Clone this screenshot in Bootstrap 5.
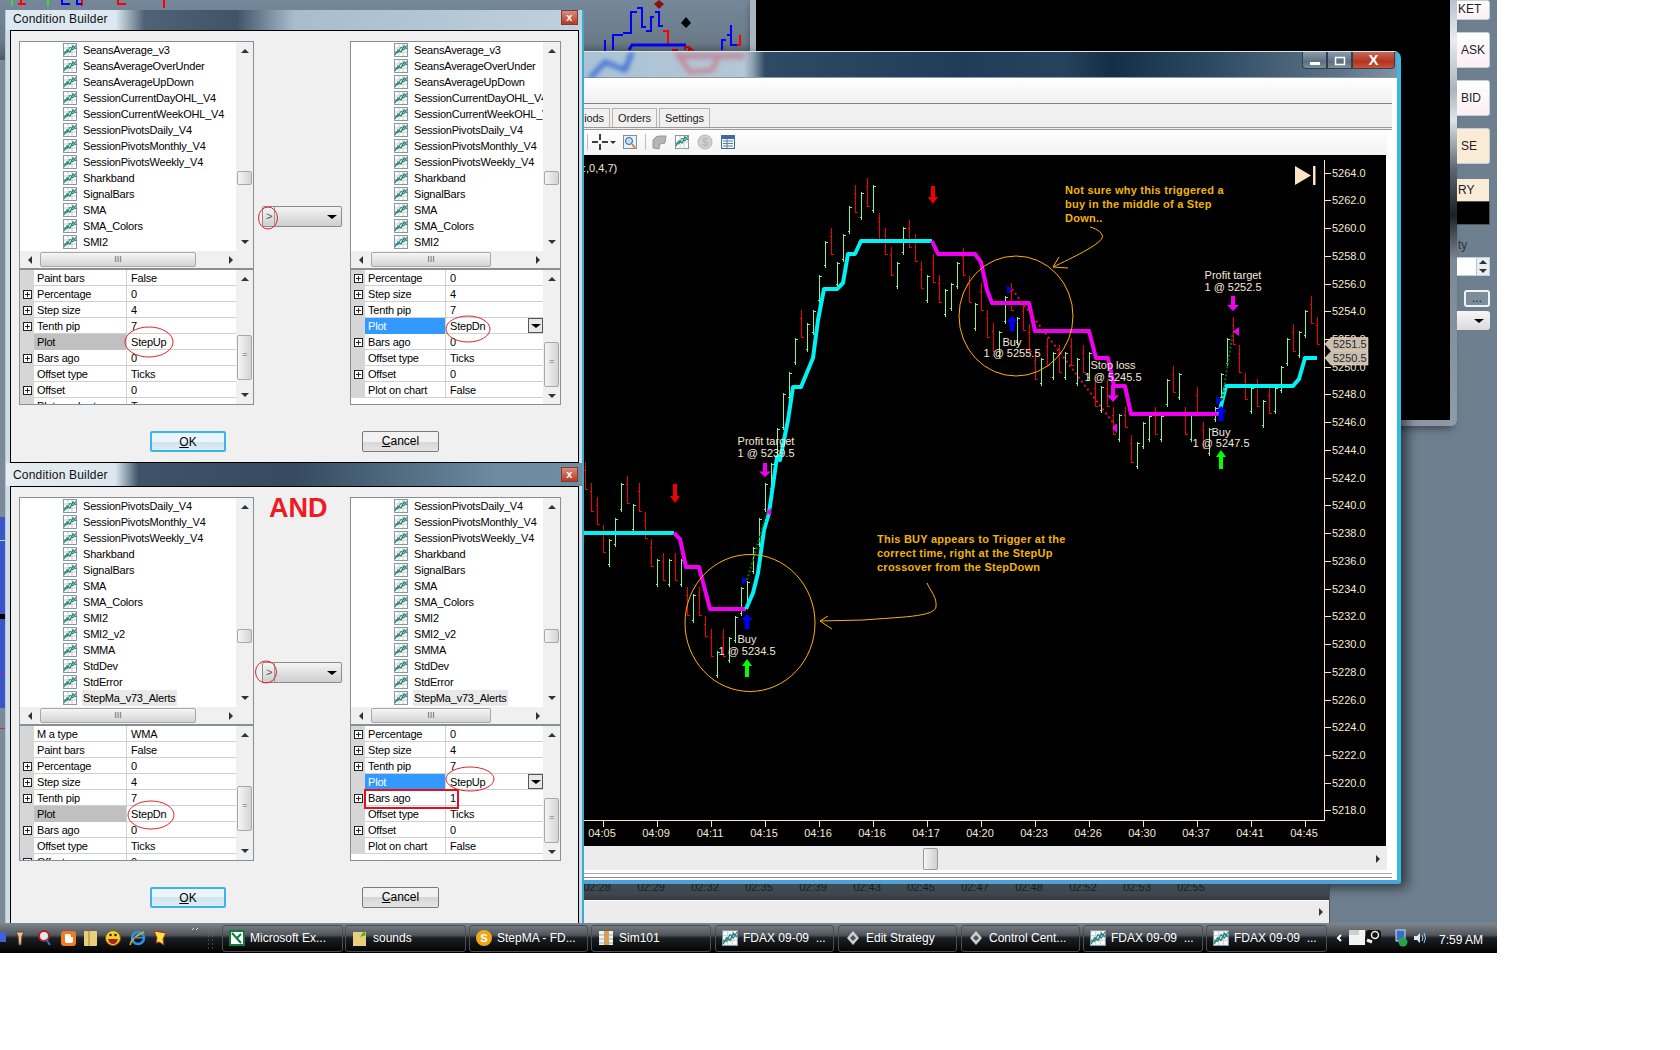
<!DOCTYPE html>
<html lang="en">
<head>
<meta charset="utf-8">
<title>Condition Builder</title>
<link href="https://cdn.jsdelivr.net/npm/bootstrap@5.3.0/dist/css/bootstrap.min.css" rel="stylesheet">
<style>
html,body{background:#fff;margin:0;height:1050px;overflow:hidden}
body{font-family:"Liberation Sans",Arial,sans-serif;font-size:11px;color:#000}
.desk{position:relative;width:1497px;height:953px;background:#6e7f90;overflow:hidden}
.layer{position:absolute;display:block}
/* back windows */
.backtop{left:0;top:0}
.backstrip{left:0;top:0}
.blackwin{left:750px;top:0;width:700px;height:426px;background:#000;border-left:6px solid #a9b4bf;border-bottom:6px solid #8c98a4;box-shadow:2px 2px 8px rgba(0,0,0,.5)}
.blackframe{left:1450px;top:0;width:7px;height:426px;border-bottom-right-radius:6px;background:linear-gradient(#b8c2cc 0,#e8ecef 40px,#aab4be 90px,#dfe4e8 120px,#5b6570 170px,#1c2127 215px,#7c8894 260px,#8f9ba6 100%)}
.sidepanel{left:1457px;top:0;width:33px;height:330px;color:#222;font-size:12px}
.sb{height:36px;margin-top:12px;background:linear-gradient(#fff,#fdeef4);border:1px solid #c3cdd6;border-left:0;border-radius:0 3px 3px 0;line-height:34px;padding-left:4px}
.sb-first{height:20px;margin-top:0;line-height:16px;padding-left:1px}
.sb-peach{background:#faebd7}
.sb-ry{height:22px;margin-top:15px;background:#faebd7;line-height:22px;padding-left:1px;border:0;border-radius:0;width:32px}
.sb-black{height:24px;background:#000;border:1px solid #555;border-left:0;width:33px}
.sb-ty{margin-top:11px;height:16px;color:#333;padding-left:1px}
.sb-spin{height:19px;margin-top:5px;background:#fff;border:1px solid #c3cdd6;border-left:0;display:flex;justify-content:flex-end}
.spincell{width:13px;background:#e8eef4;border-left:1px solid #b9c4cf;display:flex;flex-direction:column;align-items:center;justify-content:space-around}
.tu-b{border-color:transparent transparent #5a78b0}
.td-l{border-color:#5a78b0 transparent transparent}
.sb-dots{width:26px;height:17px;margin:14px 0 0 7px;background:#7d8c9b;border:2px solid #f2f2f2;border-radius:3px;text-align:center;line-height:12px;color:#222}
.sb-drop{height:19px;margin-top:4px;background:linear-gradient(#f7f7f7,#dadada);border-radius:0 3px 3px 0;display:flex;justify-content:flex-end;align-items:center;padding-right:6px}
.backbot{left:570px;top:878px;width:760px;height:45px;border-right:1px solid #555;background:linear-gradient(#7e92a5 0,#6d7f8f 6px,#4f5a64 12px,#33383d 22px)}
.backlabels{height:22px;line-height:18px;color:#22282e;font-size:11px}
.backlabels span{width:54px;text-align:center;flex:none}
.backscroll{height:23px;background:#ececec;border-left:1px solid #fff;border-top:1px solid #fff;padding-right:6px}
/* main chart window */
.mainwin{left:560px;top:51px;width:841px;height:833px;border-right:4px solid #39b9e6;border-bottom:4px solid #4aa3d4;border-top:1px solid #dfe7ee;border-radius:0 7px 3px 0;box-shadow:6px 4px 12px rgba(0,0,0,.55);background:#fff}
.mw-title{height:26px;flex:none;position:relative;padding-right:2px;background:linear-gradient(90deg,#a9c2d6 0,#b3c7d6 22%,#8ea2b2 23%,#2f4a64 24.500%,#203c59 48%,#27425c 60%,#142e47 66%,#2e4a63 78%,#5c7488 93%,#7f93a3 100%);border-bottom:1px solid #8a9aa8}
.glass{left:0;top:0}
.wbtn{height:17px;width:25px;position:relative;background:linear-gradient(#8a9cab,#5d7183 60%,#7c8e9c);border:1px solid #2f3f4e;border-top:0;color:#fff;text-align:center}
.wbtn-first{border-bottom-left-radius:4px}
.wbtn-x{width:43px;background:linear-gradient(#c46a5a,#b5321e 60%,#c9553c);border-bottom-right-radius:4px;font-weight:bold;font-size:15px;line-height:15px}
.mw-tb1{height:26px;flex:none;margin-right:5px;background:linear-gradient(#fff,#f0f0f0);border-bottom:1px solid #808080}
.mw-tabs{height:26px;flex:none;margin-right:5px;background:#f0f0f0;padding-top:4px;border-bottom:3px double #9a9a9a;font-size:11px;letter-spacing:-.1px}
.mwtab{height:19px;border:1px solid #b5b5b5;border-bottom:0;background:#f0f0f0;line-height:18px;margin-right:2px;padding:0 5px;color:#222}
.mwtab-cut{width:50px;text-align:right;padding:0 5px;border-left:0}
.mw-tb2{height:25px;flex:none;margin-right:10px;background:linear-gradient(#fff,#f2f2f2)}
.mw-chart{display:block;flex:none;background:#000}
.mw-scroll{height:24px;flex:none;margin-right:10px;background:#ececec;padding:1px 7px 0 363px}
.hthumb{width:15px;height:22px;border:1px solid #999;border-radius:2px;background:linear-gradient(90deg,#f4f4f4,#d0d0d0)}
.mw-foot{flex-grow:1;border-top:1px solid #aaa;border-bottom:1px solid #888;margin:3px 5px 2px 0}
/* dialogs */
.dlg{width:579px;background:#cfdde8;border-right:2px solid #3ba9cc;border-left:1px solid #b9c6d1}
.dlg-a{left:5px;top:10px;height:453px}
.dlg-b{left:5px;top:463px;height:468px;border-bottom:2px solid #3ba9cc}
.dt{flex:none;padding-left:7px;font-size:12px;letter-spacing:.2px;color:#111}
.dt-a{height:20px;line-height:18px;background:linear-gradient(90deg,#dce8f1 0,#dde8f0 19%,#4f6376 24%,#3f5468 40%,#a9bccc 50%,#bfd1de 100%)}
.dt-b{height:23px;line-height:24px;background:linear-gradient(90deg,#e6edf3 0,#dbe6ee 19%,#3e5367 23%,#354a5e 50%,#6c8aa1 85%,#6f8ca3 100%)}
.dx{width:17px;height:15px;margin:0 4px 0 0;background:linear-gradient(#dd8b7c,#b73a24);border:1px solid #7e3b30;color:#fff;font-weight:bold;font-size:11px;line-height:13px;text-align:center}
.dbody{margin:0 3px 0 4px;border:1px solid #000;background:#f0f0f0;padding:10px 0 0 8px;font-size:11px;letter-spacing:-.2px}
.colleft{width:235px;flex:none}
.colmid{width:96px;flex:none}
.colright{width:211px;flex:none}
.combo{width:80px;height:21px;margin:165px 0 0 8px;border:1px solid #8b8b8b;border-radius:2px;background:linear-gradient(#f4f4f4,#cfcfcf);padding:0 4px;font-size:11px}
.combo-gt{color:#555;border-right:1px solid #999;width:12px;height:19px;line-height:19px;margin-left:-4px;padding-left:3px}
.lbox{height:228px;border:1px solid #8a8f96;background:#fff}
.litems{height:209px;overflow:hidden;list-style:none;margin:0;padding:0}
.litems li{height:16px;line-height:16px;padding-left:43px;white-space:nowrap;display:flex;align-items:center}
.litems svg{width:14px;height:14px;flex:none;margin-right:6px}
.sel-item{background:#e9e9e9;padding:0 1px;margin-left:-1px}
.vbar{width:17px;flex:none;background:#f0f0f0}
.arrowcell{height:18px;flex:none}
.vthumb{width:15px;margin-left:1px;flex:none;border:1px solid #a8a8a8;border-radius:2px;background:linear-gradient(90deg,#f5f5f5,#d4d4d4);color:#666;font-size:9px;line-height:3px;text-align:center}
.t-s{height:14px}
.t111{margin-top:111px}.t113{margin-top:113px}
.t47{margin-top:47px}.t54{margin-top:54px}.t42{margin-top:42px}
.t-g{height:45px;padding-top:17px}
.hbar{height:17px;flex:none;background:#f0f0f0}
.harrow{width:20px;flex:none}
.hgrip{height:15px;border:1px solid #a8a8a8;border-radius:2px;background:linear-gradient(#f5f5f5,#d4d4d4);color:#666;font-size:9px;line-height:12px;text-align:center;letter-spacing:0}
.w156{width:156px}.w120{width:120px}
.tu,.td,.tl,.tr2{width:0;height:0;border-style:solid;display:block}
.tu{border-width:0 4px 4px;border-color:transparent transparent #333}
.td{border-width:4px 4px 0;border-color:#333 transparent transparent}
.tl{border-width:4px 4px 4px 0;border-color:transparent #333 transparent transparent}
.tr2{border-width:4px 0 4px 4px;border-color:transparent transparent transparent #333}
.td-b{border-width:4px 5px 0;border-color:#000 transparent transparent}
.gridbox{height:136px;border:1px solid #8a8f96;background:#fff}
.grows{overflow:hidden}
.gr{height:16px;line-height:17px;border-bottom:1px solid #d0d0d0;flex:none}
.gg{flex:none;width:14px;background:#d6d6d6;display:flex;align-items:center;justify-content:center;height:16px}
.gn{flex:none;padding-left:3px;height:16px;border-right:1px solid #d0d0d0}
.gv{flex-grow:1;padding-left:4px;height:15px;display:flex;justify-content:space-between}
.nw-l .gn{width:93px}.nw-r .gn{width:81px}
.gn-gray{background:#c0c0c0}
.gn-blue{background:#3399ff;color:#fff}
.plus{width:9px;height:9px;border:1px solid #222;background:linear-gradient(#222,#222) center/5px 1px no-repeat,linear-gradient(#222,#222) center/1px 5px no-repeat,#fff}
.dropb{width:15px;height:15px;border:1px solid #555;background:#e8e8e8;display:flex;align-items:center;justify-content:center}
.btnrow{margin-top:26px;padding-left:131px}
.wbt{width:76px;height:21px;padding:0;font-size:12px;line-height:19px;color:#000;letter-spacing:0;border:1px solid #7a7a7a;border-radius:2px;background:linear-gradient(#f2f2f2 50%,#d6d6d6 50%,#e4e4e4)}
.wbt:hover{color:#000}
.wbt-ok{border:2px solid #3db4e8;background:linear-gradient(#eaf6fc 50%,#d0e4ee 50%,#dbecf5)}
.wbt-c{margin-left:136px;width:77px}
.ul{text-decoration:underline}
.overlay{left:0;top:0;pointer-events:none}
.andword{left:263px;top:27px;font-size:27px;line-height:36px;font-weight:bold;color:#ed1c24;font-family:"Liberation Sans",Arial,sans-serif}
.redrect{left:358px;top:326px;width:95px;height:20px;border:2px solid #e3101c}
/* taskbar */
.taskbar{left:0;top:923px;width:1497px;height:30px;background:linear-gradient(#80868c 0,#50565c 12px,#1c2024 15px,#000 100%);color:#fff;font-size:12px}
.tbtn{position:absolute;top:2px;height:27px;border:1px solid #4a4f55;border-radius:3px;display:flex;align-items:center;padding:0 0 1px 6px;white-space:nowrap;gap:5px}
.tbtn svg{flex:none}
.tb-a{left:222px;width:121px}.tb-b{left:345px;width:121px}.tb-c{left:469px;width:119px}.tb-d{left:591px;width:120px}.tb-e{left:715px;width:119px}.tb-f{left:838px;width:119px}.tb-g{left:961px;width:119px}.tb-h{left:1083px;width:120px}.tb-i{left:1206px;width:121px}
.tray{left:1330px;top:0}
.clock{position:absolute;left:1439px;top:8px}
</style>
</head>
<body>
<svg width="0" height="0" class="position-absolute">
<defs>
<symbol id="ci" viewBox="0 0 14 14"><rect x=".5" y=".5" width="13" height="13" fill="#fff" stroke="#8a97a3"/><path d="M1 5h12M1 9h12M5 1v12M9 1v12" stroke="#c4ccd4" stroke-width="1" fill="none"/><path d="M1 12l3-5 3 2 3-6 3 3" stroke="#1f9a3a" stroke-width="1.4" fill="none"/><path d="M1 9l3 1 3-6 3 3 3-5" stroke="#2f6fc8" stroke-width="1" fill="none"/></symbol>
<filter id="blur3"><feGaussianBlur stdDeviation="2.500"/></filter>
</defs>
</svg>
<div class="desk">

<svg class="layer backtop" width="756" height="60" viewBox="0 0 756 60">
<defs><linearGradient id="bg1" x1="0" y1="0" x2="0" y2="1"><stop offset="0" stop-color="#75889a"/><stop offset=".7" stop-color="#6a7a88"/><stop offset="1" stop-color="#4d5a64"/></linearGradient></defs>
<rect width="756" height="60" fill="url(#bg1)"/>
<g fill="none" stroke-width="2" shape-rendering="crispEdges">
<path d="M12 0V6M48 0V6" stroke="#43d543"/>
<path d="M21 0V4M18 4H26M82 0V6M118 0V4H126" stroke="#ff0000"/>
<path d="M62 0V4H70M77 0V4H82" stroke="#0000ff"/>
<path d="M164 0V8" stroke="#ff0000"/>
<path d="M605 52V40M613 50V35H623M623 33H631V12H637M637 8H642V27H646M646 31H651V17H654M655 12H659V26H663M722 50V40H726M727 35H731V25M731 35V45H737" stroke="#0000ff"/>
<path d="M663 31H668V44M737 45H740V35" stroke="#ff0000"/>
</g>
<path d="M629 50L632 45H686" stroke="#0000ff" stroke-width="3" fill="none"/>
<path d="M659 0L664 4L659 9L654 4Z" fill="#8a1010"/>
<path d="M686 17L691 23L686 28L681 23Z" fill="#000"/>
<path d="M672 50h6M685 50v-3h4v4M690 48l3 3" stroke="#c00" stroke-width="2" fill="none"/>
</svg>
<svg class="layer backstrip" width="6" height="925" viewBox="0 0 6 925">
<rect x="0" y="60" width="6" height="865" fill="#7c8a97"/>
<rect x="0" y="517" width="5" height="191" fill="#3a55c8"/>
<rect x="0" y="614" width="5" height="5" fill="#000"/>
<rect x="0" y="540" width="5" height="1" fill="#7fa"/>
<rect x="0" y="672" width="5" height="1" fill="#a2a"/>
<rect x="0" y="728" width="5" height="1" fill="#c33"/>
</svg>

<div class="layer blackwin"></div>
<div class="layer blackframe"></div>

<div class="layer sidepanel">
<div class="sb sb-first">KET</div>
<div class="sb">ASK</div>
<div class="sb">BID</div>
<div class="sb sb-peach">SE</div>
<div class="sb sb-ry">RY</div>
<div class="sb-black"></div>
<div class="sb-ty">ty</div>
<div class="sb-spin"><div class="spincell"><span class="tu tu-b"></span><span class="td td-l"></span></div></div>
<div class="sb-dots">...</div>
<div class="sb-drop"><span class="td td-b"></span></div>
</div>

<div class="layer backbot d-flex flex-column">
<div class="backlabels d-flex"><span>02:28</span><span>02:29</span><span>02:32</span><span>02:35</span><span>02:39</span><span>02:43</span><span>02:45</span><span>02:47</span><span>02:48</span><span>02:52</span><span>02:53</span><span>02:55</span></div>
<div class="backscroll d-flex justify-content-end align-items-center"><span class="tr2"></span></div>
</div>

<!-- main chart window -->
<div class="layer mainwin d-flex flex-column">
<div class="mw-title d-flex justify-content-end align-items-start">
<svg class="layer glass" width="200" height="26" viewBox="560 52 200 26">
<g filter="url(#blur3)" fill="none" stroke-width="4">
<path d="M590 78L605 62L625 70L632 52" stroke="#2a5fd8"/>
<path d="M676 52L690 72L712 70L720 54" stroke="#c7808c"/>
<path d="M680 56H745" stroke="#bc8ea0" stroke-width="6"/>
</g>
</svg>
<div class="wbtn wbtn-first"><svg width="12" height="12" viewBox="0 0 12 12"><rect x="1" y="7" width="10" height="3" fill="#fff"/></svg></div>
<div class="wbtn"><svg width="12" height="12" viewBox="0 0 12 12"><rect x="1.5" y="2.5" width="9" height="7" fill="none" stroke="#fff" stroke-width="1.5"/></svg></div>
<div class="wbtn wbtn-x">X</div>
</div>
<div class="mw-tb1"></div>
<div class="mw-tabs d-flex"><div class="mwtab mwtab-cut">iods</div><div class="mwtab">Orders</div><div class="mwtab">Settings</div></div>
<div class="mw-tb2 d-flex align-items-center">
<svg width="180" height="25" viewBox="560 130 180 25">
<path d="M587.5 134v16M645.5 134v16" stroke="#bbb"/>
<path d="M592 142h6M602 142h6M600 134v6M600 144v6" stroke="#000" stroke-width="1.5"/>
<path d="M610 141h6l-3 3z" fill="#333"/>
<rect x="623.5" y="135.5" width="13" height="13" fill="#e8f0f8" stroke="#7a8fa8"/><circle cx="629" cy="141" r="3.5" fill="#bfe0ff" stroke="#33618f"/><path d="M632 144l3 4" stroke="#d88a2a" stroke-width="2"/>
<path d="M653 140q3-5 8-4l5 0-1 7-5 1-1 5-6-1z" fill="#b5b5b5" stroke="#999"/>
<rect x="675.5" y="135.5" width="13" height="13" fill="#fff" stroke="#8a97a3"/><path d="M676 142h13M680 136v13M684 136v13" stroke="#c4ccd4"/><path d="M676 146l3-5 3 2 3-6 3 3" stroke="#1f9a3a" stroke-width="1.4" fill="none"/><path d="M676 143l3 1 3-6 3 3 3-5" stroke="#2f6fc8" fill="none"/>
<circle cx="705" cy="142" r="7" fill="#cfcfcf" stroke="#b5b5b5"/><text x="705" y="146" font-size="10" text-anchor="middle" fill="#b0b0b0" font-family="Liberation Sans">$</text>
<rect x="721.5" y="135.5" width="13" height="13" fill="#f4f8fc" stroke="#3f6a9a"/><rect x="722" y="136" width="12" height="3" fill="#3f6a9a"/><path d="M723 141h10M723 143.500h10M723 146h10M727 139v9" stroke="#5f80a5"/>
</svg>
</div>
<svg class="mw-chart" id="chart" width="826" height="691" viewBox="560 155 826 691" font-family="Liberation Sans, Arial, sans-serif" font-size="11" fill="#f6e8d6">
<g id="bars" shape-rendering="crispEdges"></g>
<g fill="none" stroke-linejoin="round">
<polyline points="560,533 674,533" stroke="#00f2f2" stroke-width="4"/>
<polyline points="674,533 680,539 686,567 699,567 710,609 746,609" stroke="#f000f0" stroke-width="4"/>
<polyline points="746,609 753,593 758,573 764,530 769,513 777,457 780,460 788,420 793,387 801,387 813,358 818,320 824,289 837,289 843,283 848,254 855,254 861,241 932,241" stroke="#00f2f2" stroke-width="4"/>
<polyline points="932,241 938,254 975,254 981,262 987,290 992,303 1029,303 1035,331 1089,331 1096,358 1108,358 1114,386 1125,386 1131,414 1219,414" stroke="#f000f0" stroke-width="4"/>
<polyline points="1219,414 1226,386 1293,386 1299,379 1305,358 1317,358" stroke="#00f2f2" stroke-width="4"/>
<path d="M1012 289L1117 428" stroke="#d8134f" stroke-width="2" stroke-dasharray="2 3"/>
<path d="M747 580L767 512" stroke="#0f6b10" stroke-width="2" stroke-dasharray="2 2"/>
<path d="M1222 400L1233 332" stroke="#0f6b10" stroke-width="2" stroke-dasharray="2 2"/>
<ellipse cx="750" cy="623" rx="65" ry="68.500" stroke="#ffb400"/>
<ellipse cx="1016" cy="316" rx="57" ry="60" stroke="#ffb400"/>
<path d="M927 583C931 592 937 597 936 607C934 617 900 617 863 620L820 621M828 616L820 621L832 629" stroke="#ffb400"/>
<path d="M1090 227C1098 229 1104 234 1102 238C1099 245 1072 258 1053 267M1059 257L1053 267L1068 268" stroke="#ffb400"/>
</g>
<g id="arrows"></g>
<path d="M1007 285L1012 289.500L1007 294ZM1216 396L1222 400.500L1216 405ZM742 576L747 580.500L742 585Z" fill="#0000e6"/>
<path d="M1117 423.500L1112 428L1117 433ZM1239 327L1233 331.500L1239 336ZM771 508L766 512L771 516Z" fill="#f000f0"/>
<g text-anchor="middle">
<text x="1012" y="346">Buy</text><text x="1012" y="357">1 @ 5255.5</text>
<text x="1113" y="369">Stop loss</text><text x="1113" y="381">1 @ 5245.5</text>
<text x="1221" y="436">Buy</text><text x="1221" y="447">1 @ 5247.5</text>
<text x="1233" y="279">Profit target</text><text x="1233" y="291">1 @ 5252.5</text>
<text x="766" y="445">Profit target</text><text x="766" y="457">1 @ 5239.5</text>
<text x="747" y="643">Buy</text><text x="747" y="655">1 @ 5234.5</text>
</g>
<text x="583" y="172">:,0,4,7)</text>
<g font-weight="bold" fill="#f2b400" letter-spacing=".25">
<text x="1065" y="194">Not sure why this triggered a</text>
<text x="1065" y="208">buy in the middle of a Step</text>
<text x="1065" y="222">Down..</text>
<text x="877" y="543">This BUY appears to Trigger at the</text>
<text x="877" y="557">correct time, right at the StepUp</text>
<text x="877" y="571">crossover from the StepDown</text>
</g>
<path d="M1295 166L1311 175.500L1295 185Z" fill="#ffe4c4"/><rect x="1313" y="166" width="2.500" height="19" fill="#ffe4c4"/>
<path id="axis" d="M560 820.500H1324.500V160" fill="none" stroke="#ffe4c4" shape-rendering="crispEdges"/>
<path id="ticks" fill="none" stroke="#ffe4c4" shape-rendering="crispEdges"/>
<g text-anchor="start"><text x="1332" y="177">5264.0</text><text x="1332" y="204">5262.0</text><text x="1332" y="232">5260.0</text><text x="1332" y="260">5258.0</text><text x="1332" y="288">5256.0</text><text x="1332" y="315">5254.0</text><text x="1332" y="343">5252.0</text><text x="1332" y="371">5250.0</text><text x="1332" y="398">5248.0</text><text x="1332" y="426">5246.0</text><text x="1332" y="454">5244.0</text><text x="1332" y="482">5242.0</text><text x="1332" y="509">5240.0</text><text x="1332" y="537">5238.0</text><text x="1332" y="565">5236.0</text><text x="1332" y="593">5234.0</text><text x="1332" y="620">5232.0</text><text x="1332" y="648">5230.0</text><text x="1332" y="676">5228.0</text><text x="1332" y="704">5226.0</text><text x="1332" y="731">5224.0</text><text x="1332" y="759">5222.0</text><text x="1332" y="787">5220.0</text><text x="1332" y="814">5218.0</text></g>
<g text-anchor="middle"><text x="602" y="837">04:05</text><text x="656" y="837">04:09</text><text x="710" y="837">04:11</text><text x="764" y="837">04:15</text><text x="818" y="837">04:16</text><text x="872" y="837">04:16</text><text x="926" y="837">04:17</text><text x="980" y="837">04:20</text><text x="1034" y="837">04:23</text><text x="1088" y="837">04:26</text><text x="1142" y="837">04:30</text><text x="1196" y="837">04:37</text><text x="1250" y="837">04:41</text><text x="1304" y="837">04:45</text></g>
<path d="M1325 344L1331 337.500H1368V351H1331ZM1325 358L1331 351.500H1368V365H1331Z" fill="#c9bfb0" stroke="#ffe4c4" stroke-width=".6"/>
<text x="1333" y="348" fill="#2a2a2a">5251.5</text><text x="1333" y="362" fill="#2a2a2a">5250.5</text>
</svg>
<div class="mw-scroll d-flex justify-content-between align-items-center"><div class="hthumb"></div><span class="tr2"></span></div>
<div class="mw-foot"></div>
</div>

<!-- dialog A -->
<div class="layer dlg dlg-a d-flex flex-column">
<div class="dt dt-a d-flex justify-content-between"><span>Condition Builder</span><span class="dx">x</span></div>
<div class="dbody flex-grow-1">
<div class="d-flex">
<div class="colleft">
<div class="lbox d-flex flex-column">
<div class="d-flex flex-grow-1">
<ul class="litems flex-grow-1">
<li><svg><use href="#ci"/></svg>SeansAverage_v3</li><li><svg><use href="#ci"/></svg>SeansAverageOverUnder</li><li><svg><use href="#ci"/></svg>SeansAverageUpDown</li><li><svg><use href="#ci"/></svg>SessionCurrentDayOHL_V4</li><li><svg><use href="#ci"/></svg>SessionCurrentWeekOHL_V4</li><li><svg><use href="#ci"/></svg>SessionPivotsDaily_V4</li><li><svg><use href="#ci"/></svg>SessionPivotsMonthly_V4</li><li><svg><use href="#ci"/></svg>SessionPivotsWeekly_V4</li><li><svg><use href="#ci"/></svg>Sharkband</li><li><svg><use href="#ci"/></svg>SignalBars</li><li><svg><use href="#ci"/></svg>SMA</li><li><svg><use href="#ci"/></svg>SMA_Colors</li><li><svg><use href="#ci"/></svg>SMI2</li>
</ul>
<div class="vbar d-flex flex-column"><div class="arrowcell d-flex justify-content-center align-items-center"><span class="tu"></span></div><div class="vthumb t-s t111"></div><div class="arrowcell mt-auto d-flex justify-content-center align-items-center"><span class="td"></span></div></div>
</div>
<div class="hbar d-flex align-items-center"><div class="harrow d-flex justify-content-center"><span class="tl"></span></div><div class="hgrip w156">III</div><div class="flex-grow-1"></div><div class="harrow d-flex justify-content-center pe-2 me-2"><span class="tr2"></span></div></div>
</div>
<div class="gridbox d-flex nw-l">
<div class="grows flex-grow-1">
<div class="gr d-flex"><div class="gg"></div><div class="gn">Paint bars</div><div class="gv">False</div></div>
<div class="gr d-flex"><div class="gg"><span class="plus"></span></div><div class="gn">Percentage</div><div class="gv">0</div></div>
<div class="gr d-flex"><div class="gg"><span class="plus"></span></div><div class="gn">Step size</div><div class="gv">4</div></div>
<div class="gr d-flex"><div class="gg"><span class="plus"></span></div><div class="gn">Tenth pip</div><div class="gv">7</div></div>
<div class="gr d-flex"><div class="gg"></div><div class="gn gn-gray">Plot</div><div class="gv">StepUp</div></div>
<div class="gr d-flex"><div class="gg"><span class="plus"></span></div><div class="gn">Bars ago</div><div class="gv">0</div></div>
<div class="gr d-flex"><div class="gg"></div><div class="gn">Offset type</div><div class="gv">Ticks</div></div>
<div class="gr d-flex"><div class="gg"><span class="plus"></span></div><div class="gn">Offset</div><div class="gv">0</div></div>
<div class="gr d-flex"><div class="gg"></div><div class="gn">Plot on chart</div><div class="gv">True</div></div>
</div>
<div class="vbar d-flex flex-column"><div class="arrowcell d-flex justify-content-center align-items-center"><span class="tu"></span></div><div class="vthumb t-g t47">=</div><div class="arrowcell mt-auto d-flex justify-content-center align-items-center"><span class="td"></span></div></div>
</div>
</div>
<div class="colmid"><div class="combo d-flex justify-content-between align-items-center"><span class="combo-gt">&gt;</span><span class="td td-b"></span></div></div>
<div class="colright">
<div class="lbox d-flex flex-column">
<div class="d-flex flex-grow-1">
<ul class="litems flex-grow-1">
<li><svg><use href="#ci"/></svg>SeansAverage_v3</li><li><svg><use href="#ci"/></svg>SeansAverageOverUnder</li><li><svg><use href="#ci"/></svg>SeansAverageUpDown</li><li><svg><use href="#ci"/></svg>SessionCurrentDayOHL_V4</li><li><svg><use href="#ci"/></svg>SessionCurrentWeekOHL_V4</li><li><svg><use href="#ci"/></svg>SessionPivotsDaily_V4</li><li><svg><use href="#ci"/></svg>SessionPivotsMonthly_V4</li><li><svg><use href="#ci"/></svg>SessionPivotsWeekly_V4</li><li><svg><use href="#ci"/></svg>Sharkband</li><li><svg><use href="#ci"/></svg>SignalBars</li><li><svg><use href="#ci"/></svg>SMA</li><li><svg><use href="#ci"/></svg>SMA_Colors</li><li><svg><use href="#ci"/></svg>SMI2</li>
</ul>
<div class="vbar d-flex flex-column"><div class="arrowcell d-flex justify-content-center align-items-center"><span class="tu"></span></div><div class="vthumb t-s t111"></div><div class="arrowcell mt-auto d-flex justify-content-center align-items-center"><span class="td"></span></div></div>
</div>
<div class="hbar d-flex align-items-center"><div class="harrow d-flex justify-content-center"><span class="tl"></span></div><div class="hgrip w120">III</div><div class="flex-grow-1"></div><div class="harrow d-flex justify-content-center pe-2 me-2"><span class="tr2"></span></div></div>
</div>
<div class="gridbox d-flex nw-r">
<div class="grows flex-grow-1">
<div class="gr d-flex"><div class="gg"><span class="plus"></span></div><div class="gn">Percentage</div><div class="gv">0</div></div>
<div class="gr d-flex"><div class="gg"><span class="plus"></span></div><div class="gn">Step size</div><div class="gv">4</div></div>
<div class="gr d-flex"><div class="gg"><span class="plus"></span></div><div class="gn">Tenth pip</div><div class="gv">7</div></div>
<div class="gr d-flex"><div class="gg"></div><div class="gn gn-blue">Plot</div><div class="gv"><span>StepDn</span><span class="dropb"><span class="td td-b"></span></span></div></div>
<div class="gr d-flex"><div class="gg"><span class="plus"></span></div><div class="gn">Bars ago</div><div class="gv">0</div></div>
<div class="gr d-flex"><div class="gg"></div><div class="gn">Offset type</div><div class="gv">Ticks</div></div>
<div class="gr d-flex"><div class="gg"><span class="plus"></span></div><div class="gn">Offset</div><div class="gv">0</div></div>
<div class="gr d-flex"><div class="gg"></div><div class="gn">Plot on chart</div><div class="gv">False</div></div>
</div>
<div class="vbar d-flex flex-column"><div class="arrowcell d-flex justify-content-center align-items-center"><span class="tu"></span></div><div class="vthumb t-g t54">=</div><div class="arrowcell mt-auto d-flex justify-content-center align-items-center"><span class="td"></span></div></div>
</div>
</div>
</div>
<div class="btnrow d-flex"><button type="button" class="btn wbt wbt-ok"><span class="ul">O</span>K</button><button type="button" class="btn wbt wbt-c"><span class="ul">C</span>ancel</button></div>
</div>
<svg class="layer overlay" width="579" height="453" viewBox="5 10 579 453" fill="none" stroke="#e3202c">
<ellipse cx="267" cy="218" rx="9.500" ry="11"/><ellipse cx="148" cy="342" rx="24" ry="15"/><ellipse cx="467" cy="329" rx="22" ry="13"/>
</svg>
</div>

<!-- dialog B -->
<div class="layer dlg dlg-b d-flex flex-column">
<div class="dt dt-b d-flex justify-content-between"><span>Condition Builder</span><span class="dx mt-1">x</span></div>
<div class="dbody flex-grow-1">
<div class="d-flex">
<div class="colleft">
<div class="lbox d-flex flex-column">
<div class="d-flex flex-grow-1">
<ul class="litems flex-grow-1">
<li><svg><use href="#ci"/></svg>SessionPivotsDaily_V4</li><li><svg><use href="#ci"/></svg>SessionPivotsMonthly_V4</li><li><svg><use href="#ci"/></svg>SessionPivotsWeekly_V4</li><li><svg><use href="#ci"/></svg>Sharkband</li><li><svg><use href="#ci"/></svg>SignalBars</li><li><svg><use href="#ci"/></svg>SMA</li><li><svg><use href="#ci"/></svg>SMA_Colors</li><li><svg><use href="#ci"/></svg>SMI2</li><li><svg><use href="#ci"/></svg>SMI2_v2</li><li><svg><use href="#ci"/></svg>SMMA</li><li><svg><use href="#ci"/></svg>StdDev</li><li><svg><use href="#ci"/></svg>StdError</li><li><svg><use href="#ci"/></svg><span class="sel-item">StepMa_v73_Alerts</span></li>
</ul>
<div class="vbar d-flex flex-column"><div class="arrowcell d-flex justify-content-center align-items-center"><span class="tu"></span></div><div class="vthumb t-s t113"></div><div class="arrowcell mt-auto d-flex justify-content-center align-items-center"><span class="td"></span></div></div>
</div>
<div class="hbar d-flex align-items-center"><div class="harrow d-flex justify-content-center"><span class="tl"></span></div><div class="hgrip w156">III</div><div class="flex-grow-1"></div><div class="harrow d-flex justify-content-center pe-2 me-2"><span class="tr2"></span></div></div>
</div>
<div class="gridbox d-flex nw-l">
<div class="grows flex-grow-1">
<div class="gr d-flex"><div class="gg"></div><div class="gn">M a type</div><div class="gv">WMA</div></div>
<div class="gr d-flex"><div class="gg"></div><div class="gn">Paint bars</div><div class="gv">False</div></div>
<div class="gr d-flex"><div class="gg"><span class="plus"></span></div><div class="gn">Percentage</div><div class="gv">0</div></div>
<div class="gr d-flex"><div class="gg"><span class="plus"></span></div><div class="gn">Step size</div><div class="gv">4</div></div>
<div class="gr d-flex"><div class="gg"><span class="plus"></span></div><div class="gn">Tenth pip</div><div class="gv">7</div></div>
<div class="gr d-flex"><div class="gg"></div><div class="gn gn-gray">Plot</div><div class="gv">StepDn</div></div>
<div class="gr d-flex"><div class="gg"><span class="plus"></span></div><div class="gn">Bars ago</div><div class="gv">0</div></div>
<div class="gr d-flex"><div class="gg"></div><div class="gn">Offset type</div><div class="gv">Ticks</div></div>
<div class="gr d-flex"><div class="gg"><span class="plus"></span></div><div class="gn">Offset</div><div class="gv">0</div></div>
</div>
<div class="vbar d-flex flex-column"><div class="arrowcell d-flex justify-content-center align-items-center"><span class="tu"></span></div><div class="vthumb t-g t42">=</div><div class="arrowcell mt-auto d-flex justify-content-center align-items-center"><span class="td"></span></div></div>
</div>
</div>
<div class="colmid"><div class="combo d-flex justify-content-between align-items-center"><span class="combo-gt">&gt;</span><span class="td td-b"></span></div></div>
<div class="colright">
<div class="lbox d-flex flex-column">
<div class="d-flex flex-grow-1">
<ul class="litems flex-grow-1">
<li><svg><use href="#ci"/></svg>SessionPivotsDaily_V4</li><li><svg><use href="#ci"/></svg>SessionPivotsMonthly_V4</li><li><svg><use href="#ci"/></svg>SessionPivotsWeekly_V4</li><li><svg><use href="#ci"/></svg>Sharkband</li><li><svg><use href="#ci"/></svg>SignalBars</li><li><svg><use href="#ci"/></svg>SMA</li><li><svg><use href="#ci"/></svg>SMA_Colors</li><li><svg><use href="#ci"/></svg>SMI2</li><li><svg><use href="#ci"/></svg>SMI2_v2</li><li><svg><use href="#ci"/></svg>SMMA</li><li><svg><use href="#ci"/></svg>StdDev</li><li><svg><use href="#ci"/></svg>StdError</li><li><svg><use href="#ci"/></svg><span class="sel-item">StepMa_v73_Alerts</span></li>
</ul>
<div class="vbar d-flex flex-column"><div class="arrowcell d-flex justify-content-center align-items-center"><span class="tu"></span></div><div class="vthumb t-s t113"></div><div class="arrowcell mt-auto d-flex justify-content-center align-items-center"><span class="td"></span></div></div>
</div>
<div class="hbar d-flex align-items-center"><div class="harrow d-flex justify-content-center"><span class="tl"></span></div><div class="hgrip w120">III</div><div class="flex-grow-1"></div><div class="harrow d-flex justify-content-center pe-2 me-2"><span class="tr2"></span></div></div>
</div>
<div class="gridbox d-flex nw-r">
<div class="grows flex-grow-1">
<div class="gr d-flex"><div class="gg"><span class="plus"></span></div><div class="gn">Percentage</div><div class="gv">0</div></div>
<div class="gr d-flex"><div class="gg"><span class="plus"></span></div><div class="gn">Step size</div><div class="gv">4</div></div>
<div class="gr d-flex"><div class="gg"><span class="plus"></span></div><div class="gn">Tenth pip</div><div class="gv">7</div></div>
<div class="gr d-flex"><div class="gg"></div><div class="gn gn-blue">Plot</div><div class="gv"><span>StepUp</span><span class="dropb"><span class="td td-b"></span></span></div></div>
<div class="gr d-flex"><div class="gg"><span class="plus"></span></div><div class="gn">Bars ago</div><div class="gv">1</div></div>
<div class="gr d-flex"><div class="gg"></div><div class="gn">Offset type</div><div class="gv">Ticks</div></div>
<div class="gr d-flex"><div class="gg"><span class="plus"></span></div><div class="gn">Offset</div><div class="gv">0</div></div>
<div class="gr d-flex"><div class="gg"></div><div class="gn">Plot on chart</div><div class="gv">False</div></div>
</div>
<div class="vbar d-flex flex-column"><div class="arrowcell d-flex justify-content-center align-items-center"><span class="tu"></span></div><div class="vthumb t-g t54">=</div><div class="arrowcell mt-auto d-flex justify-content-center align-items-center"><span class="td"></span></div></div>
</div>
</div>
</div>
<div class="btnrow d-flex"><button type="button" class="btn wbt wbt-ok"><span class="ul">O</span>K</button><button type="button" class="btn wbt wbt-c"><span class="ul">C</span>ancel</button></div>
</div>
<div class="layer andword">AND</div>
<div class="layer redrect"></div>
<svg class="layer overlay" width="579" height="468" viewBox="5 463 579 468" fill="none" stroke="#e3202c">
<ellipse cx="265" cy="672" rx="10.500" ry="11"/><ellipse cx="150" cy="815" rx="23" ry="14"/><ellipse cx="469" cy="779" rx="24" ry="12"/>
</svg>
</div>

<!-- taskbar -->
<div class="layer taskbar">
<svg class="layer" width="215" height="30" viewBox="0 923 215 30">
<rect x="0" y="932" width="6" height="10" fill="#3f62d8"/>
<path d="M16 932l8 0-2 4-1 9h-2l-1-9z" fill="#d8c9a8" stroke="#7a3b22"/>
<circle cx="44" cy="936" r="5" fill="#e6e6e6" stroke="#b02020" stroke-width="2"/><path d="M46 939l4 6" stroke="#2f73c0" stroke-width="2"/>
<rect x="61" y="931" width="15" height="15" rx="3" fill="#f47a20"/><path d="M65 934h4q2 0 2 3h2v4q0 2-2 2h-5q-1 0-1-2z" fill="#fff"/>
<rect x="84" y="931" width="13" height="15" rx="1" fill="#e8cf7e"/><rect x="88" y="931" width="2" height="15" fill="#c9a94d"/>
<circle cx="113" cy="938" r="7.500" fill="#f5cf2e" stroke="#7a5b10"/><path d="M108 939h10q-1 5-5 5t-5-5z" fill="#a22"/><circle cx="110.500" cy="935" r="1.300" fill="#222"/><circle cx="115.500" cy="935" r="1.300" fill="#222"/>
<ellipse cx="138" cy="938" rx="6" ry="6" fill="none" stroke="#2f8fe0" stroke-width="2.500"/><path d="M130 945q2-8 14-13" stroke="#e0b020" stroke-width="1.500" fill="none"/><rect x="134" y="937" width="9" height="1.500" fill="#2f8fe0"/>
<path d="M154 931l12 2-3 6 1 6-5-3-3 1 1-5z" fill="#f7e24a" stroke="#b02a20"/>
<path d="M192 930l2-2M196 930l2-2" stroke="#ddd"/>
<path d="M208 932h1M212 932h1M208 936h1M212 936h1M208 940h1M212 940h1M208 944h1M212 944h1M208 948h1M212 948h1" stroke="#777"/>
</svg>
<div class="tbtn tb-a"><svg width="16" height="16" viewBox="0 0 16 16"><rect width="16" height="16" fill="#0f7a3c"/><rect x="2" y="2" width="12" height="12" fill="#fff"/><path d="M3 3l9 10M12 4L7 9" stroke="#0f7a3c" stroke-width="2"/></svg><span>Microsoft Ex...</span></div>
<div class="tbtn tb-b"><svg width="16" height="16" viewBox="0 0 16 16"><rect x="1" y="2" width="13" height="14" fill="#e8cf7e"/><path d="M8 7l4-6 2 4z" fill="#4caf2a"/></svg><span>sounds</span></div>
<div class="tbtn tb-c"><svg width="16" height="16" viewBox="0 0 16 16"><circle cx="8" cy="8" r="8" fill="#eea716"/><text x="8" y="12" font-size="11" font-weight="bold" text-anchor="middle" fill="#fff">S</text></svg><span>StepMA - FD...</span></div>
<div class="tbtn tb-d"><svg width="16" height="16" viewBox="0 0 16 16"><rect x="1" y="1" width="14" height="14" fill="#f2f2f2"/><rect x="6" y="1" width="5" height="14" fill="#e99a3a"/><path d="M1 5h14M1 9h14M1 13h14" stroke="#9aa"/></svg><span>Sim101</span></div>
<div class="tbtn tb-e"><svg width="16" height="16"><use href="#ci"/></svg><span>FDAX 09-09 &nbsp;...</span></div>
<div class="tbtn tb-f"><svg width="16" height="16" viewBox="0 0 16 16"><path d="M8 1l6 7-6 7-6-7z" fill="#cfcfcf"/><path d="M8 5l3 3-3 3-3-3z" fill="#555"/></svg><span>Edit Strategy</span></div>
<div class="tbtn tb-g"><svg width="16" height="16" viewBox="0 0 16 16"><path d="M8 1l6 7-6 7-6-7z" fill="#cfcfcf"/><path d="M8 5l3 3-3 3-3-3z" fill="#555"/></svg><span>Control Cent...</span></div>
<div class="tbtn tb-h"><svg width="16" height="16"><use href="#ci"/></svg><span>FDAX 09-09 &nbsp;...</span></div>
<div class="tbtn tb-i"><svg width="16" height="16"><use href="#ci"/></svg><span>FDAX 09-09 &nbsp;...</span></div>
<svg class="layer tray" width="100" height="30" viewBox="1330 923 100 30">
<path d="M1341 935l-3 3 3 3" stroke="#fff" stroke-width="2" fill="none"/>
<rect x="1349" y="930" width="16" height="15" fill="#f2f2f2"/><rect x="1349" y="930" width="10" height="5" fill="#cfcfcf"/>
<rect x="1366" y="930" width="15" height="16" rx="3" fill="#111"/><circle cx="1375" cy="935" r="3.500" fill="none" stroke="#eee" stroke-width="1.500"/><path d="M1367 940l5 2" stroke="#eee" stroke-width="3"/>
<rect x="1396" y="930" width="9" height="11" fill="#3a6fc8" stroke="#cde"/><circle cx="1403" cy="942" r="4.500" fill="#2aa24a"/>
<path d="M1414 936h3l3-3v10l-3-3h-3z" fill="#dfe7ee"/><path d="M1422 935q2 3 0 6M1424 933q3 5 0 10" stroke="#9fd0f5" fill="none"/>
</svg>
<div class="clock">7:59 AM</div>
</div>
</div>
<script src="https://cdn.jsdelivr.net/npm/bootstrap@5.3.0/dist/js/bootstrap.bundle.min.js"></script>
<script>
// price bars: [zoomed x, zoomed top, zoomed bottom, up?]; origins differ per crop of the reference
var a=[[16,65,150,0],[34,130,215,0],[52,170,255,0],[70,255,340,0],[88,298,380,1],[106,235,320,1],[124,130,215,1],[142,108,193,0],[160,193,277,1],[178,130,215,0],[196,215,298,0],[214,298,380,0],[232,358,442,1],[250,340,423,0],[268,358,442,1],[286,340,423,0],[304,358,442,1],[322,442,527,0],[340,463,548,1],[358,442,527,0],[376,527,590,0],[394,568,652,0],[412,632,713,1],[430,568,652,0],[448,590,670,1],[466,527,610,1],[484,442,527,1],[502,423,505,1],[520,320,402,1],[538,235,320,1],[556,130,215,1],[574,68,152,1]];
var b=[[592,1285,1380,1],[610,1180,1290,1],[628,1115,1200,1],[646,1015,1095,1],[664,930,1015,0],[682,970,1055,1],[700,930,1005,1],[718,825,910,1],[736,723,805,1],[754,683,765,0],[772,785,860,1],[790,703,785,1],[808,618,703,1],[826,555,640,0],[844,575,660,1],[862,535,620,0],[880,555,640,1],[898,640,720,0],[916,683,765,0],[934,740,827,0],[952,785,868,1],[970,680,765,1],[988,660,743,0],[1006,703,785,0],[1024,783,868,0],[1042,825,910,1],[1060,763,848,0],[1078,825,910,0],[1096,868,952,1],[1114,848,932,1],[1132,785,868,1],[1150,743,827,0],[1168,827,910,0],[1186,910,993,1],[1204,848,932,0],[1222,930,1015,0],[1240,970,1055,0],[1258,993,1075,1],[1276,888,973,1],[1294,848,932,0],[1312,952,1035,1],[1330,910,993,0],[1348,973,1055,0],[1366,1055,1140,0],[1384,1075,1158,1],[1402,1015,1097,0],[1420,1055,1140,1],[1438,1035,1118,0],[1456,1055,1140,1],[1474,1015,1097,0],[1492,1075,1158,1],[1510,1035,1118,0],[1528,1055,1140,1],[1546,1140,1222,0],[1564,1158,1240,1],[1582,1140,1222,0],[1600,1222,1305,0],[1618,1243,1325,1],[1636,1222,1285,0],[1654,1305,1388,0],[1672,1325,1407,1],[1690,1265,1347,1],[1708,1245,1327,1],[1726,1222,1305,0],[1744,1245,1327,1],[1762,1138,1222,1],[1780,1097,1180,0],[1798,1118,1200,1],[1816,1222,1305,0],[1834,1243,1325,1],[1852,1160,1243,0],[1870,1265,1347,0],[1888,1285,1367,1],[1906,1222,1265,1],[1924,1118,1200,1],[1942,1015,1097,1],[1960,952,1035,0],[1978,1035,1118,0],[1996,1118,1200,0],[2014,1160,1243,1],[2032,1138,1222,0],[2050,1200,1285,1],[2068,1160,1243,0],[2086,1160,1243,1],[2104,1097,1180,1],[2122,1015,1097,1],[2140,973,1055,0],[2158,993,1075,1],[2176,930,1015,1],[2194,888,973,0],[2212,952,1035,0]];
var up='',dn='';
function add(X,t,bt,c){var x=Math.round(580+X/3)+.5,y1=Math.round(t),y2=Math.round(bt);
 var s='M'+x+' '+y1+'V'+y2+'M'+(x-2)+' '+(c?y2-3:y1+8)+'h2M'+x+' '+(c?y1+1:y2-1)+'h2';
 if(c)up+=s;else dn+=s;}
a.forEach(function(r){add(r[0],440+r[1]/3,440+r[2]/3,r[3]);});
b.forEach(function(r){add(r[0],r[1]/3,r[2]/3,r[3]);});
document.getElementById('bars').innerHTML='<path d="'+up+'" stroke="#90ee90" fill="none"/><path d="'+dn+'" stroke="#f00000" fill="none"/>';
// thick order arrows
function arrow(x,y1,y2,col,down,w,hw){var h=Math.min(7,(y2-y1)*.4),d;
 if(down)d='M'+(x-w)+' '+y1+'H'+(x+w)+'V'+(y2-h)+'H'+(x+hw)+'L'+x+' '+y2+'L'+(x-hw)+' '+(y2-h)+'H'+(x-w)+'Z';
 else d='M'+(x-w)+' '+y2+'H'+(x+w)+'V'+(y1+h)+'H'+(x+hw)+'L'+x+' '+y1+'L'+(x-hw)+' '+(y1+h)+'H'+(x-w)+'Z';
 return '<path d="'+d+'" fill="'+col+'"/>';}
document.getElementById('arrows').innerHTML=
 arrow(933,186,204,'#f00000',1,2,5)+arrow(675,484,503,'#f00000',1,2,5)+
 arrow(1012,316,331,'#0000f0',0,2.5,6)+arrow(1221,406,421,'#0000f0',0,2.5,6)+arrow(747,614,629,'#0000f0',0,2.5,6)+
 arrow(1221,450,469,'#00ff00',0,2,5)+arrow(747,659,677,'#00ff00',0,2,5)+
 arrow(1113,385,402,'#f000f0',1,2,6)+arrow(1233,296,311,'#f000f0',1,2,6)+arrow(765,463,477,'#f000f0',1,2,6);
// axis ticks
var t='';[173,200,228,256,284,311,339,367,394,422,450,478,505,533,561,589,616,644,672,700,727,755,783,810].forEach(function(y){t+='M1325 '+(y+.5)+'h6';});
for(var i=0;i<14;i++){t+='M'+(603.5+54*i)+' 821v6';}
document.getElementById('ticks').setAttribute('d',t);
</script>
</body>
</html>
